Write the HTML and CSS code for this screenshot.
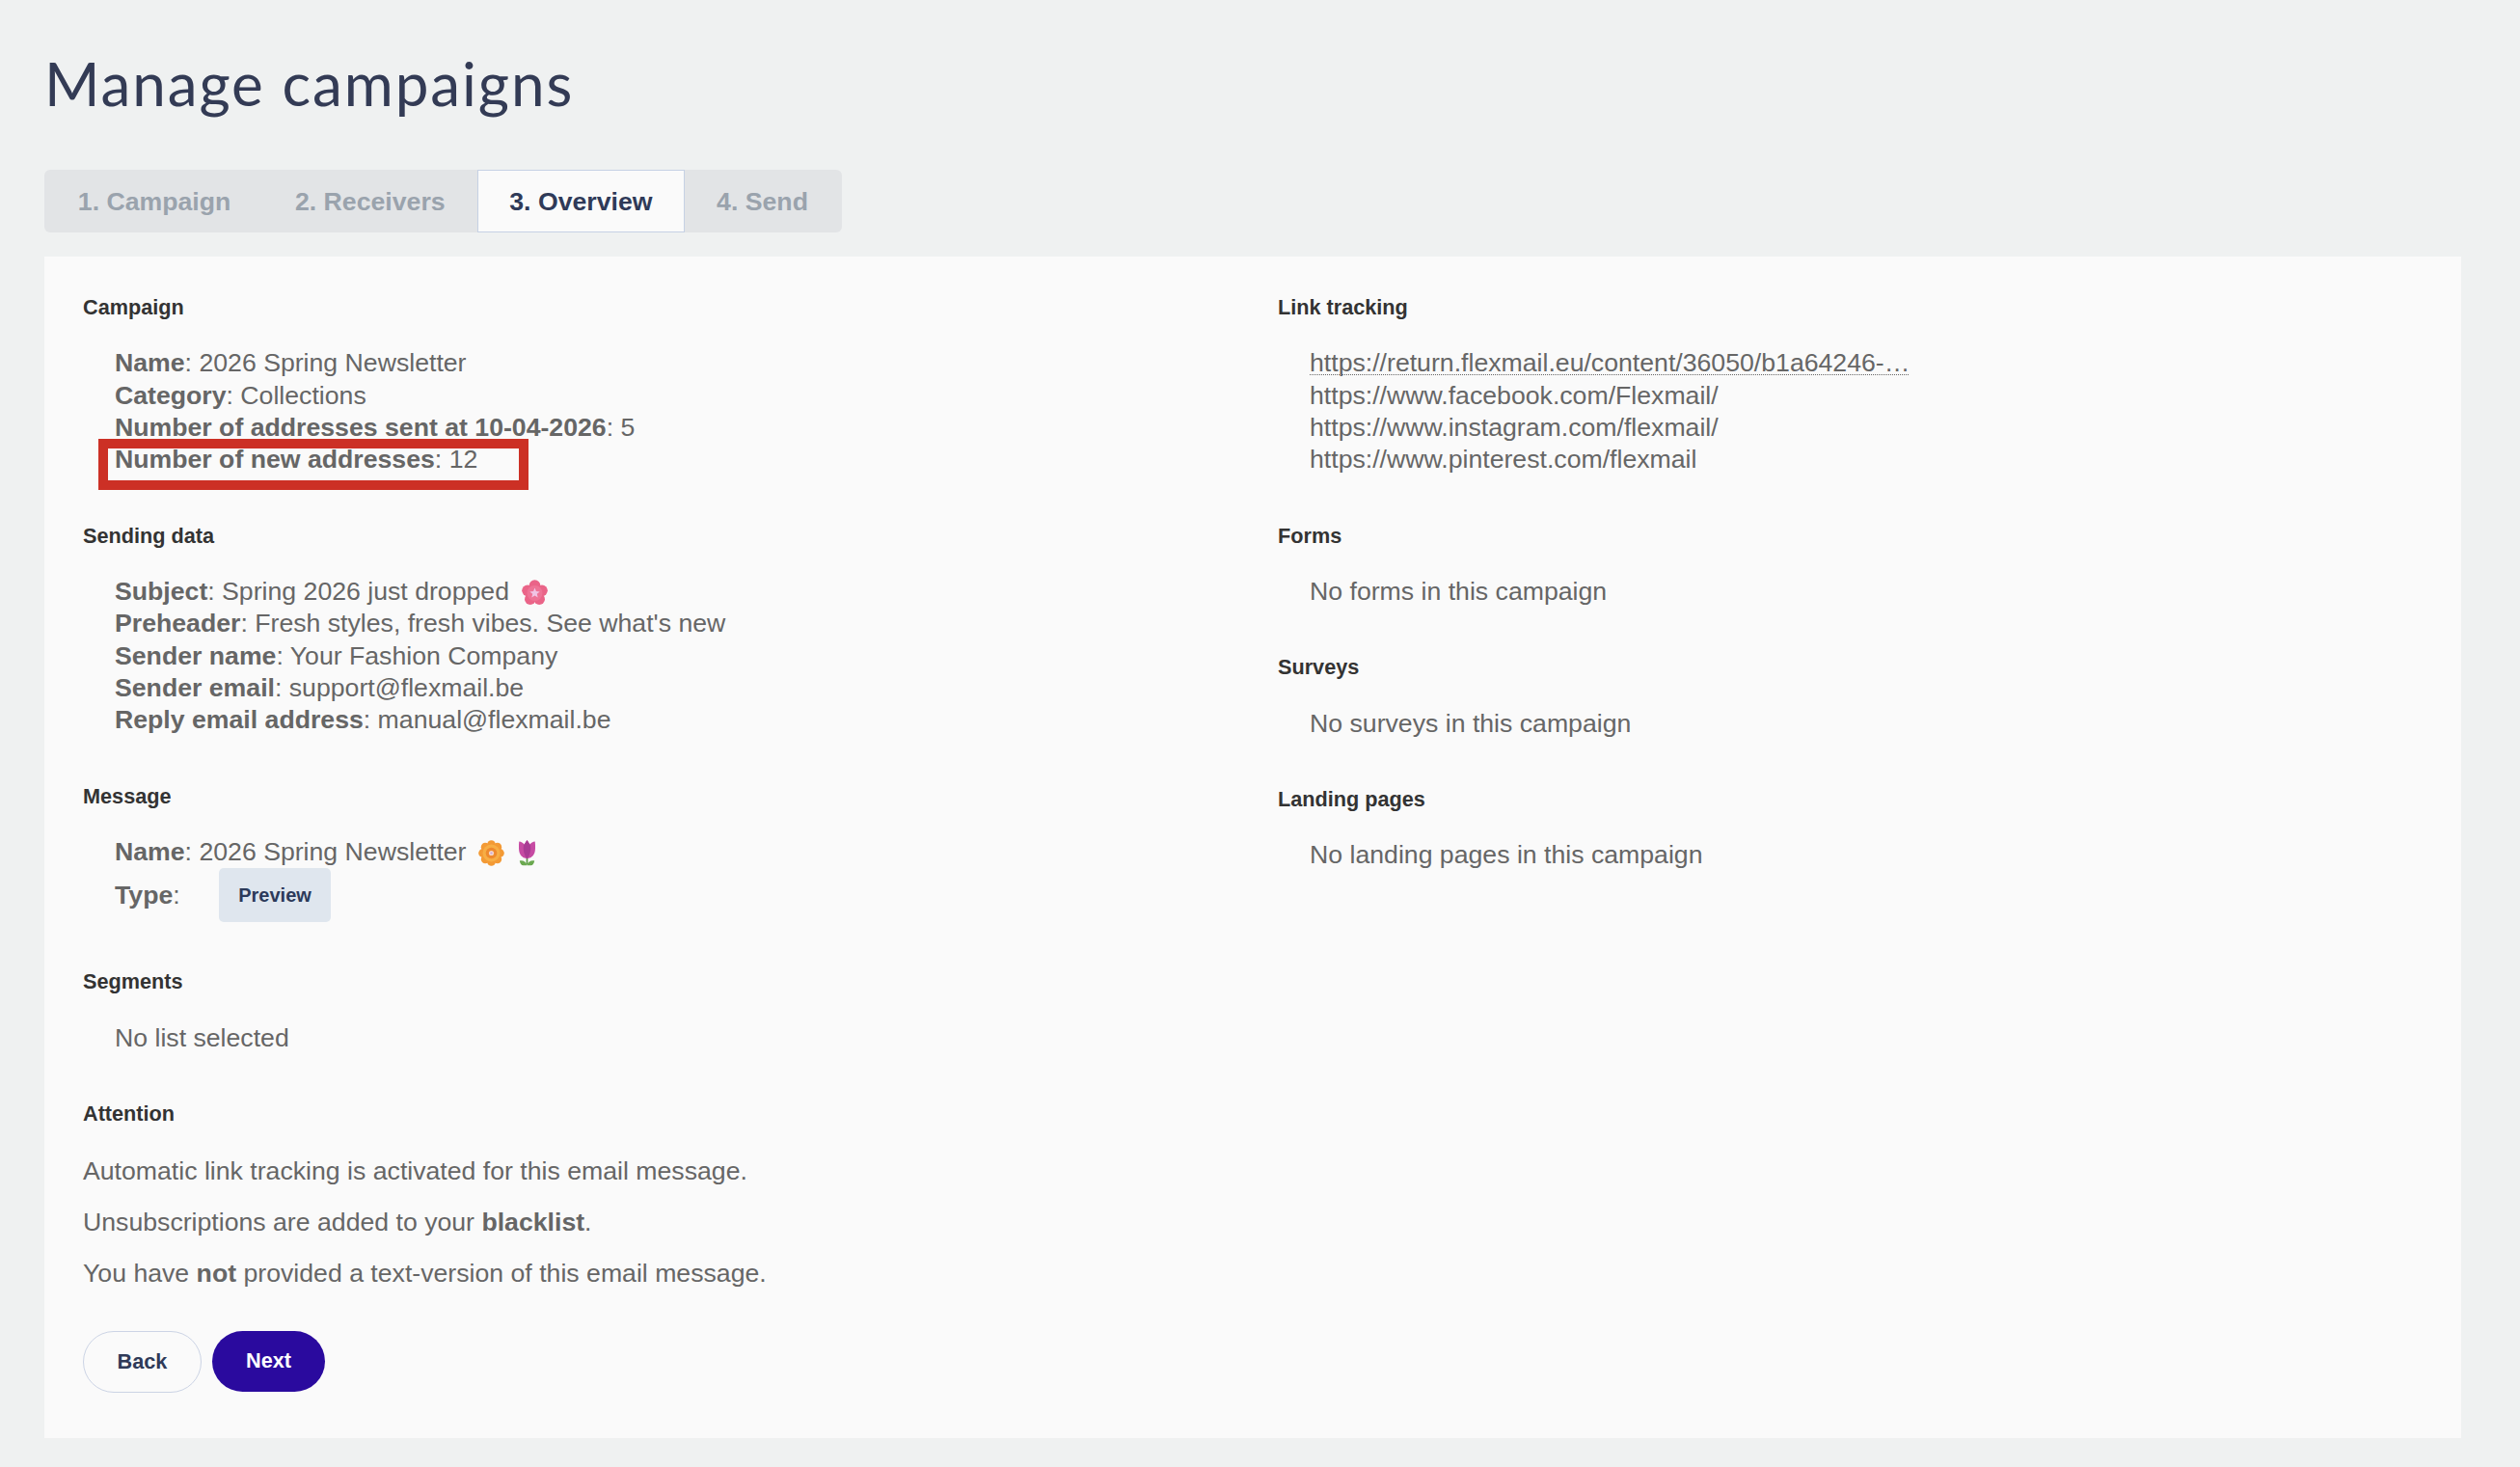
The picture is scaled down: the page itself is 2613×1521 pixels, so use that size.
FILE: index.html
```html
<!DOCTYPE html>
<html lang="en">
<head>
<meta charset="utf-8">
<title>Manage campaigns</title>
<link rel="stylesheet" href="styles.css">
</head>
<body>
<main class="page">
  <h1 class="title">Manage campaigns</h1>
  <nav class="tabs">
    <span class="tab">1. Campaign</span>
    <span class="tab">2. Receivers</span>
    <span class="tab tab-active">3. Overview</span>
    <span class="tab">4. Send</span>
  </nav>
  <div class="card">
    <div class="col">
      <section class="section">
        <h3 class="heading">Campaign</h3>
        <ul class="list">
          <li><b>Name</b>: 2026 Spring Newsletter</li>
          <li><b>Category</b>: Collections</li>
          <li><b>Number of addresses sent at 10-04-2026</b>: 5</li>
          <li class="marked"><b>Number of new addresses</b>: 12<span class="red-box"></span></li>
        </ul>
      </section>
      <section class="section">
        <h3 class="heading">Sending data</h3>
        <ul class="list">
          <li><b>Subject</b>: Spring 2026 just dropped
            <svg class="emoji emoji-blossom" viewBox="0 0 27 27" aria-hidden="true">
              <g fill="#ea6488">
                <circle cx="13.5" cy="6" r="5.8"/>
                <circle cx="21" cy="11.3" r="5.8"/>
                <circle cx="18.2" cy="20.2" r="5.8"/>
                <circle cx="8.800" cy="20.2" r="5.8"/>
                <circle cx="6" cy="11.3" r="5.8"/>
              </g>
              <circle cx="13.5" cy="14" r="8" fill="#ee7396"/>
              <path d="M13.500 8.600l1.400 3.500 3.800.3-2.900 2.400.9 3.700-3.200-2-3.200 2 .9-3.700-2.900-2.400 3.800-.3z" fill="#f1c4e4"/>
            </svg>
          </li>
          <li><b>Preheader</b>: Fresh styles, fresh vibes. See what's new</li>
          <li><b>Sender name</b>: Your Fashion Company</li>
          <li><b>Sender email</b>: support@flexmail.be</li>
          <li><b>Reply email address</b>: manual@flexmail.be</li>
        </ul>
      </section>
      <section class="section">
        <h3 class="heading">Message</h3>
        <ul class="list">
          <li><b>Name</b>: 2026 Spring Newsletter
            <svg class="emoji emoji-orange" viewBox="0 0 27 27" aria-hidden="true">
              <g fill="#f39a35">
                <circle cx="13.5" cy="4.6" r="4.4"/>
                <circle cx="19.8" cy="7.2" r="4.4"/>
                <circle cx="22.4" cy="13.5" r="4.4"/>
                <circle cx="19.8" cy="19.8" r="4.4"/>
                <circle cx="13.5" cy="22.4" r="4.4"/>
                <circle cx="7.2" cy="19.8" r="4.4"/>
                <circle cx="4.6" cy="13.5" r="4.4"/>
                <circle cx="7.2" cy="7.2" r="4.4"/>
              </g>
              <circle cx="13.5" cy="13.5" r="9" fill="#f7ae45"/>
              <circle cx="13.5" cy="13.5" r="5.8" fill="#ee8a2e"/>
              <circle cx="13.5" cy="13.5" r="2.6" fill="#f4d6c8"/>
              <circle cx="13.5" cy="13.5" r="1.1" fill="#c9a6e0"/>
            </svg>
            <svg class="emoji emoji-tulip" viewBox="0 0 17 27" aria-hidden="true">
              <path d="M7.600 17h1.800v8H7.600z" fill="#5f9e4a"/>
              <path d="M.8 21.500c3.400-.6 6.600.6 7.900 4.800H4.500C2.400 26.300 1.200 24 .8 21.500zM16.200 21.500c-3.400-.6-6.600.6-7.900 4.800h4.200c2.100 0 3.300-2.300 3.700-4.800z" fill="#6aa84f"/>
              <path d="M.3 1.500c2.200.2 4 1.300 5.200 3L8.500 0l3 4.500c1.200-1.700 3-2.800 5.200-3 .5 4 .5 8-.2 11-.9 3.600-4 6.500-8 6.500s-7.100-2.900-8-6.500c-.7-3-.7-7-.2-11z" fill="#c64ba3"/>
              <path d="M8.500 0l3.600 5.400c.8 4.500-.6 9.800-3.600 14.600-3-4.800-4.400-10.100-3.600-14.600z" fill="#a93b94"/>
            </svg>
          </li>
          <li class="type-row"><b>Type</b>: <button class="preview" type="button">Preview</button></li>
        </ul>
      </section>
      <section class="section">
        <h3 class="heading">Segments</h3>
        <ul class="list">
          <li>No list selected</li>
        </ul>
      </section>
      <section class="section section-attention">
        <h3 class="heading">Attention</h3>
        <p class="note">Automatic link tracking is activated for this email message.</p>
        <p class="note">Unsubscriptions are added to your <b>blacklist</b>.</p>
        <p class="note">You have <b>not</b> provided a text-version of this email message.</p>
      </section>
      <div class="actions">
        <button class="btn btn-back" type="button">Back</button>
        <button class="btn btn-next" type="button">Next</button>
      </div>
    </div>
    <div class="col">
      <section class="section">
        <h3 class="heading">Link tracking</h3>
        <ul class="list">
          <li><span class="link-long">https://return.flexmail.eu/content/36050/b1a64246-…</span></li>
          <li>https://www.facebook.com/Flexmail/</li>
          <li>https://www.instagram.com/flexmail/</li>
          <li>https://www.pinterest.com/flexmail</li>
        </ul>
      </section>
      <section class="section">
        <h3 class="heading">Forms</h3>
        <ul class="list">
          <li>No forms in this campaign</li>
        </ul>
      </section>
      <section class="section">
        <h3 class="heading">Surveys</h3>
        <ul class="list">
          <li>No surveys in this campaign</li>
        </ul>
      </section>
      <section class="section">
        <h3 class="heading">Landing pages</h3>
        <ul class="list">
          <li>No landing pages in this campaign</li>
        </ul>
      </section>
    </div>
  </div>
</main>
</body>
</html>
```
FILE: styles.css
```css
* { box-sizing: border-box; }
html, body { margin: 0; padding: 0; }
body {
  background: #eff1f1;
  font-family: "Liberation Sans", Arial, sans-serif;
  font-size: 26.67px;
  line-height: 33.33px;
  color: #666;
}
.page { padding: 46px 61px 30px 46px; }
.title {
  margin: 0 0 50px;
  font-family: Lato, sans-serif;
  font-weight: 400;
  font-size: 62px;
  line-height: 80px;
  letter-spacing: 1.9px;
  color: #333b55;
}
.tabs {
  display: inline-flex;
  vertical-align: top;
  height: 65px;
  padding: 0 1.5px;
  background: #e2e4e6;
  border-radius: 6px;
  overflow: hidden;
}
.tab {
  display: flex;
  align-items: center;
  padding: 2px 33.33px 0;
  font-weight: 700;
  color: #9aa3ad;
}
.tab-active {
  background: #fafafa;
  box-shadow: inset 0 0 0 1px #c6d1e4;
  color: #2f3a58;
}
.card {
  display: grid;
  grid-template-columns: 1239px 1fr;
  margin-top: 25px;
  height: 1225px;
  padding: 36px 40px 48px;
  background: #fafafa;
}
.section { margin-bottom: 45px; }
.heading {
  margin: 0 0 25px;
  font-size: 21.67px;
  line-height: 33.33px;
  font-weight: 700;
  color: #333;
}
.list {
  margin: 0;
  padding: 0 0 0 33px;
  list-style: none;
}
.marked { position: relative; }
.red-box {
  position: absolute;
  left: -17px;
  top: -5px;
  width: 446px;
  height: 53px;
  border: 10px solid #cc3025;
}
.emoji {
  display: inline-block;
  height: 27px;
  width: 27px;
  vertical-align: -6px;
}
.emoji-blossom { margin-left: 6px; }
.emoji-orange { margin-left: 5px; }
.emoji-tulip { width: 17px; margin-left: 8px; }
.link-long {
  display: block;
  width: fit-content;
  background-image: linear-gradient(to right, #666 50%, transparent 50%);
  background-size: 2px 1px;
  background-repeat: repeat-x;
  background-position: 0 28px;
}
.type-row {
  display: flex;
  align-items: center;
  white-space: pre;
}
.preview {
  margin-left: 33px;
  width: 116px;
  height: 56px;
  padding: 0;
  border: 0;
  border-radius: 5px;
  background: #dfe6ee;
  color: #2c3a5a;
  font-family: inherit;
  font-size: 20px;
  font-weight: 700;
}
.section-attention { margin-bottom: 42px; }
.section-attention .heading { margin-bottom: 26.5px; }
.note { margin: 0 0 20px; }
.note:last-child { margin-bottom: 0; }
.actions { display: flex; gap: 11px; }
.btn {
  height: 64px;
  border-radius: 32px;
  font-family: inherit;
  font-size: 21.67px;
  font-weight: 700;
  padding: 0;
}
.btn-back {
  width: 123px;
  background: #fafafa;
  border: 1px solid #ccd4e5;
  color: #2f3a58;
}
.btn-next {
  width: 117px;
  height: 63px;
  background: #2a0a9e;
  border: 0;
  color: #fff;
}
```
